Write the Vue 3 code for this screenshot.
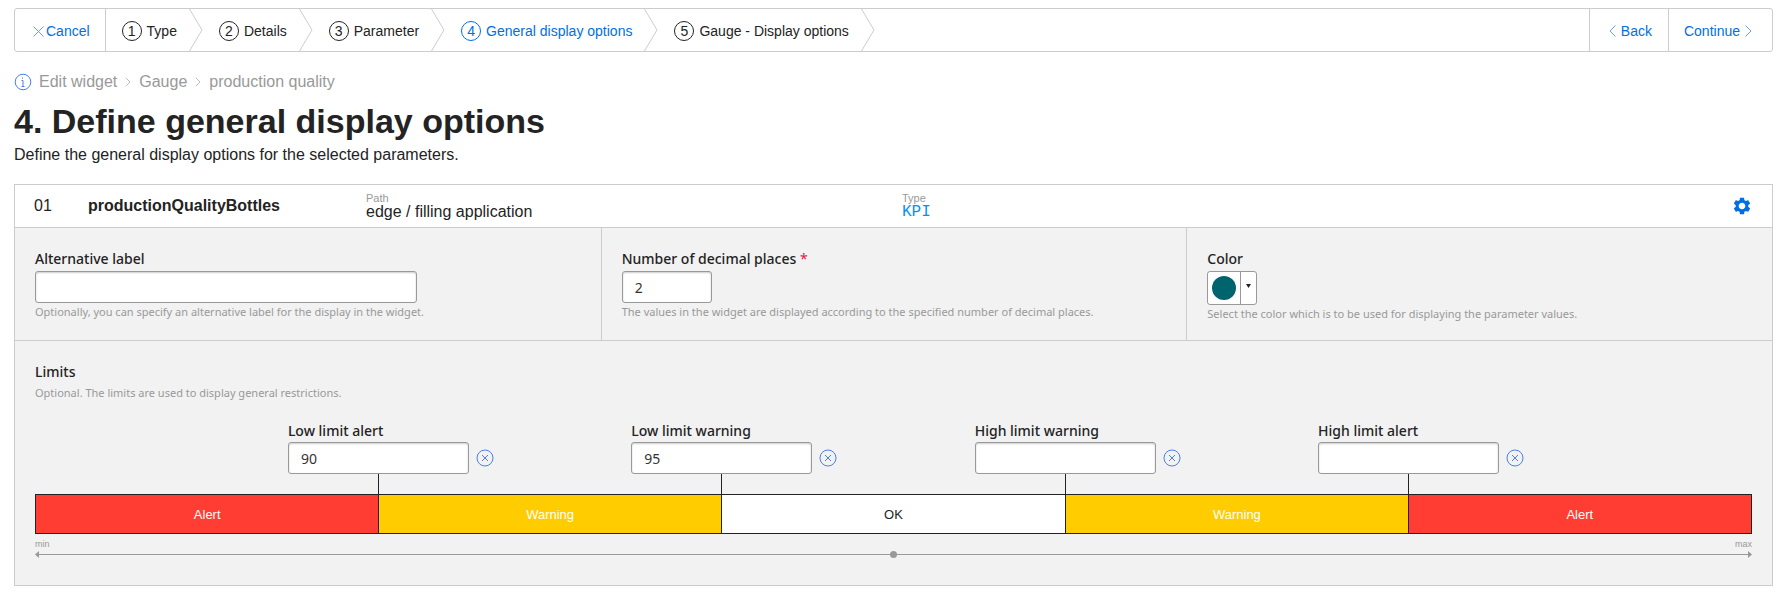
<script setup>
import { ref } from 'vue'

const steps = ['Type', 'Details', 'Parameter', 'General display options', 'Gauge - Display options']
const activeStep = 3

const crumbs = ['Edit widget', 'Gauge', 'production quality']

const label = ref('')
const decimals = ref('2')

const limits = ref([
  { id: 'low-alert', label: 'Low limit alert', value: '90' },
  { id: 'low-warning', label: 'Low limit warning', value: '95' },
  { id: 'high-warning', label: 'High limit warning', value: '' },
  { id: 'high-alert', label: 'High limit alert', value: '' },
])

const zones = [
  { text: 'Alert', kind: 'alert' },
  { text: 'Warning', kind: 'warning' },
  { text: 'OK', kind: 'ok' },
  { text: 'Warning', kind: 'warning' },
  { text: 'Alert', kind: 'alert' },
]
</script>

<template>
  <main class="page">
    <nav class="wizard" aria-label="Wizard steps">
      <button type="button" class="action cancel">
        <svg width="11" height="11" viewBox="0 0 11 11" aria-hidden="true"><path d="M.5 .5 10.5 10.5M10.5 .5.5 10.5" /></svg>
        Cancel
      </button>
      <ol class="steps">
        <li v-for="(step, i) in steps" :key="step" class="step-item">
          <button type="button" class="step" :class="{ active: i === activeStep }">
            <span class="step-number">{{ i + 1 }}</span>
            <span>{{ step }}</span>
          </button>
          <svg class="step-arrow" width="14" height="42" viewBox="0 0 14 42" aria-hidden="true"><path d="M.5 0 13 21 .5 42" /></svg>
        </li>
      </ol>
      <button type="button" class="action back">
        <svg width="7" height="12" viewBox="0 0 7 12" aria-hidden="true"><path d="M6.5 .5 1 6l5.500 5.500" /></svg>
        Back
      </button>
      <button type="button" class="action continue">
        Continue
        <svg width="7" height="12" viewBox="0 0 7 12" aria-hidden="true"><path d="M.5 .5 6 6 .5 11.500" /></svg>
      </button>
    </nav>

    <div class="crumbs">
      <svg class="info" width="18" height="18" viewBox="0 0 18 18" aria-hidden="true">
        <circle cx="9" cy="9" r="7.800" />
        <path d="M7.500 7.500H9v6M7.500 13.500h3" />
        <path d="M8.500 4.500v1.200" />
      </svg>
      <template v-for="(crumb, i) in crumbs" :key="crumb">
        <svg v-if="i" class="crumb-arrow" width="6" height="10" viewBox="0 0 6 10" aria-hidden="true"><path d="M.8 .8 5 5 .8 9.200" /></svg>
        <span>{{ crumb }}</span>
      </template>
    </div>

    <h1>4. Define general display options</h1>
    <p class="intro">Define the general display options for the selected parameters.</p>

    <section class="card">
      <header class="card-head">
        <span class="index">01</span>
        <strong class="name">productionQualityBottles</strong>
        <div class="meta path">
          <span class="meta-label">Path</span>
          <span class="meta-value">edge / filling application</span>
        </div>
        <div class="meta">
          <span class="meta-label">Type</span>
          <code class="meta-value kpi">KPI</code>
        </div>
        <button type="button" class="icon-button gear" aria-label="Settings">
          <svg width="20" height="20" viewBox="0 0 24 24" aria-hidden="true">
            <path d="M19.430 12.980c.04-.32.07-.64.07-.98s-.03-.66-.07-.98l2.110-1.650c.19-.15.24-.42.12-.64l-2-3.460c-.12-.22-.39-.3-.61-.22l-2.490 1c-.52-.4-1.080-.73-1.690-.98l-.38-2.650C14.460 2.180 14.250 2 14 2h-4c-.25 0-.46.18-.49.42l-.38 2.650c-.61.25-1.170.59-1.690.98l-2.490-1c-.23-.09-.49 0-.61.22l-2 3.460c-.13.22-.07.49.12.64l2.110 1.650c-.04.32-.07.65-.07.98s.03.66.07.98l-2.110 1.650c-.19.15-.24.42-.12.64l2 3.460c.12.22.39.3.61.22l2.490-1c.52.4 1.080.73 1.690.98l.38 2.650c.03.24.24.42.49.42h4c.25 0 .46-.18.49-.42l.38-2.650c.61-.25 1.170-.59 1.690-.98l2.490 1c.23.09.49 0 .61-.22l2-3.460c.12-.22.07-.49-.12-.64l-2.110-1.650zM12 16c-2.200 0-4-1.800-4-4s1.800-4 4-4 4 1.800 4 4-1.800 4-4 4z" />
          </svg>
        </button>
      </header>

      <div class="options">
        <div class="option">
          <label for="alt-label">Alternative label</label>
          <input id="alt-label" v-model="label" type="text" class="wide" />
          <p class="hint">Optionally, you can specify an alternative label for the display in the widget.</p>
        </div>
        <div class="option">
          <label for="decimals">Number of decimal places <span class="required">*</span></label>
          <input id="decimals" v-model="decimals" type="text" class="narrow" required />
          <p class="hint">The values in the widget are displayed according to the specified number of decimal places.</p>
        </div>
        <div class="option">
          <label for="color">Color</label>
          <button id="color" type="button" class="color-picker">
            <span class="swatch"></span>
            <span class="caret"><svg width="5" height="4" viewBox="0 0 5 4" aria-hidden="true"><path d="M0 0h5L2.500 4z" /></svg></span>
          </button>
          <p class="hint">Select the color which is to be used for displaying the parameter values.</p>
        </div>
      </div>

      <div class="limits">
        <h2>Limits</h2>
        <p class="hint">Optional. The limits are used to display general restrictions.</p>

        <div class="markers">
          <div v-for="limit in limits" :key="limit.id" class="marker">
            <label :for="limit.id">{{ limit.label }}</label>
            <input :id="limit.id" v-model="limit.value" type="text" />
            <button type="button" class="icon-button clear" :aria-label="'Clear ' + limit.label" @click="limit.value = ''">
              <svg width="18" height="18" viewBox="0 0 18 18" aria-hidden="true">
                <circle cx="9" cy="9" r="8" />
                <path d="M6 6l6 6M12 6l-6 6" />
              </svg>
            </button>
            <span class="connector"></span>
          </div>
        </div>

        <div class="zones">
          <div v-for="(zone, i) in zones" :key="i" class="zone" :class="zone.kind">{{ zone.text }}</div>
        </div>

        <div class="scale-labels"><span>min</span><span>max</span></div>
        <div class="axis">
          <svg width="4" height="7" viewBox="0 0 4 7" aria-hidden="true"><path d="M4 0v7L0 3.500z" /></svg>
          <span class="line"></span>
          <span class="dot"></span>
          <span class="line"></span>
          <svg width="4" height="7" viewBox="0 0 4 7" aria-hidden="true"><path d="M0 0v7l4-3.500z" /></svg>
        </div>
      </div>
    </section>
  </main>
</template>

<style>
body {
  margin: 0;
  background: #fff;
}
</style>

<style scoped>
* {
  box-sizing: border-box;
}

.page {
  padding: 8px 9px 8px 14px;
  color: #232323;
  font: 16px/20px "Liberation Sans", Arial, sans-serif;
}

button {
  padding: 0;
  border: 0;
  background: none;
  color: inherit;
  font: inherit;
  cursor: pointer;
}

h1,
h2,
p,
ol {
  margin: 0;
  padding: 0;
}

svg {
  flex: none;
  fill: none;
}

.wizard {
  display: flex;
  height: 44px;
  border: 1px solid #ccc;
  border-radius: 3px;
  font-size: 14px;
}

.action {
  display: flex;
  align-items: center;
  padding: 2px 16px 0;
  color: #006fe6;
}

.action svg {
  stroke: #6f9cf0;
}

.cancel {
  gap: 2px;
  padding-left: 18px;
  padding-right: 15px;
  border-right: 1px solid #ccc;
}

.back,
.continue {
  gap: 5px;
  border-left: 1px solid #ccc;
}

.back {
  padding-left: 19px;
}

.continue {
  padding-left: 15px;
  padding-right: 20px;
}

.steps {
  display: flex;
  flex: 1;
  list-style: none;
}

.step-item {
  display: flex;
}

.step {
  display: flex;
  align-items: center;
  gap: 5px;
  padding: 2px 12px 0 16px;
  white-space: nowrap;
}

.step-number {
  width: 20px;
  height: 20px;
  border: 1px solid currentColor;
  border-radius: 50%;
  line-height: 18px;
  text-align: center;
}

.step.active {
  color: #006fe6;
}

.step-arrow {
  stroke: #ccc;
}

.crumbs {
  display: flex;
  align-items: center;
  gap: 8px;
  margin-top: 20px;
  color: #999;
}

.info {
  stroke: #4a80f0;
}

.crumbs .info {
  margin-right: -1px;
}

.crumb-arrow {
  stroke: #bbb;
}

h1 {
  margin-top: 9px;
  font-size: 34px;
  line-height: 40px;
}

.intro {
  margin-top: 4px;
}

.card {
  margin-top: 19px;
  border: 1px solid #ccc;
  background: #f2f2f2;
}

.card-head {
  display: flex;
  align-items: center;
  height: 43px;
  padding: 0 20px 0 19px;
  border-bottom: 1px solid #ccc;
  background: #fff;
}

.index {
  width: 54px;
}

.name {
  width: 278px;
}

.meta {
  display: flex;
  flex-direction: column;
}

.path {
  width: 536px;
}

.meta-label {
  color: #999;
  font-size: 11px;
  line-height: 12px;
}

.meta-value {
  line-height: 16px;
}

.kpi {
  color: #0091ff;
  font-family: "Liberation Mono", "Courier New", monospace;
}

.icon-button {
  display: flex;
}

.gear {
  margin-left: auto;
}

.gear svg {
  fill: #006fe6;
}

.options {
  display: grid;
  grid-template-columns: repeat(3, 1fr);
  border-bottom: 1px solid #ccc;
}

.option {
  padding: 20px 20px 17px;
}

.option + .option {
  border-left: 1px solid #ccc;
}

label,
h2 {
  display: block;
  font: 500 14px/22px "Noto Sans", sans-serif;
}

.option label {
  margin-bottom: 1px;
}

.required {
  color: #e5173f;
  font-weight: 400;
}

input {
  display: block;
  height: 32px;
  padding: 0 12px;
  border: 1px solid #999;
  border-radius: 3px;
  background: #fff;
  box-shadow: inset 0 1px 2px #ccc;
  color: #333;
  font: 14px "Noto Sans", sans-serif;
}

.wide {
  width: 382px;
}

.narrow {
  width: 90px;
}

.hint {
  color: #999;
  font: 11px/18px "Noto Sans", sans-serif;
}

.color-picker {
  display: flex;
  width: 50px;
  height: 34px;
  border: 1px solid #999;
  border-radius: 3px;
  background: #fff;
}

.swatch {
  width: 24px;
  height: 24px;
  margin: 4px;
  border-radius: 50%;
  background: #00646e;
}

.caret {
  display: flex;
  flex: 1;
  justify-content: center;
  height: 100%;
  padding-top: 12px;
  border-left: 1px solid #999;
}

.caret svg {
  fill: #232323;
}

.limits {
  padding: 20px 20px 27px;
}

.limits .hint {
  margin-top: 1px;
}

.markers {
  display: grid;
  grid-template-columns: repeat(4, 1fr);
  margin-top: 18px;
  padding: 0 10%;
}

.marker {
  display: grid;
  grid-template-columns: 1fr 181px 1fr;
}

.marker label,
.marker input,
.marker .connector {
  grid-column: 2;
}

.marker input {
  width: 100%;
}

.clear {
  grid-column: 3;
  align-self: center;
  justify-self: start;
  margin-left: 7px;
}

.clear svg {
  stroke: #4a80e8;
}

/* Runs from the input through the zone bar, marking where two zones meet. */
.connector {
  position: relative;
  z-index: 1;
  justify-self: center;
  width: 1px;
  height: 60px;
  margin-bottom: -40px;
  background: #232323;
}

.zones {
  display: grid;
  grid-template-columns: repeat(5, 1fr);
}

.zone {
  height: 40px;
  border: 1px solid #232323;
  border-width: 1px 0;
  font-size: 13px;
  line-height: 40px;
  text-align: center;
}

.zone:first-child {
  border-left-width: 1px;
}

.zone:last-child {
  border-right-width: 1px;
}

.alert {
  background: #ff3d33;
  color: #fff;
}

.warning {
  background: #fc0;
  color: #fff;
}

.ok {
  background: #fff;
}

.scale-labels {
  display: flex;
  justify-content: space-between;
  margin-top: 4px;
  color: #999;
  font-size: 9px;
  line-height: 13px;
}

.axis {
  display: flex;
  align-items: center;
}

.axis svg {
  fill: #999;
}

.line {
  flex: 1;
  height: 1px;
  background: #999;
}

.dot {
  width: 7px;
  height: 7px;
  border-radius: 50%;
  background: #999;
}
</style>
